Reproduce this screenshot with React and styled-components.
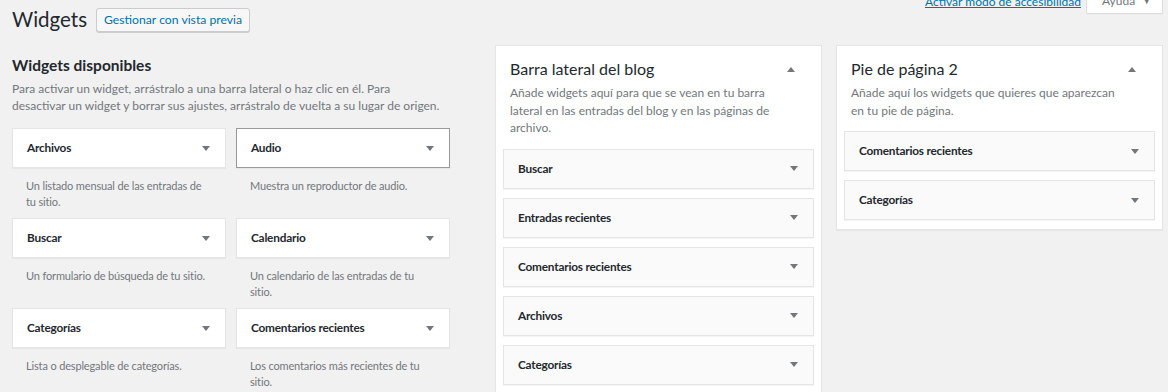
import React from 'react';
import styled, { createGlobalStyle } from 'styled-components';

const Global = createGlobalStyle`
  html, body { margin: 0; padding: 0; background: #f1f1f1; }
  body {
    font-family: Lato, "Open Sans", sans-serif;
    font-size: 12px;
    color: #444;
    overflow: hidden;
  }
  * { box-sizing: border-box; }
`;

const Page = styled.div`
  width: 1168px;
  height: 392px;
  overflow: hidden;
  padding: 6px 5px 0 12px;
`;

const Header = styled.div`
  display: flex;
  align-items: center;
  height: 27px;
`;

const Title = styled.h1`
  margin: 0;
  font-size: 20.5px;
  line-height: 27px;
  font-weight: 400;
  color: #23282d;
`;

const PreviewButton = styled.button`
  margin-left: 9px;
  height: 24px;
  padding: 0 7px;
  font-family: inherit;
  font-size: 12.2px;
  line-height: 22px;
  color: #0073aa;
  background: #f7f7f7;
  border: 1px solid #ccc;
  border-radius: 3px;
  box-shadow: 0 1px 0 #ccc;
  cursor: pointer;
`;

const ScreenMeta = styled.div`
  margin-left: auto;
  align-self: flex-start;
  margin-top: -13px;
  display: flex;
  align-items: flex-start;
  gap: 5px;
`;

const A11yLink = styled.a`
  margin-top: 1px;
  font-size: 12px;
  line-height: 16px;
  color: #0073aa;
  text-decoration: underline;
`;

const HelpButton = styled.button`
  height: 21px;
  width: 77px;
  padding: 0 0 0 15px;
  font-family: inherit;
  font-size: 12px;
  line-height: 16px;
  color: #72777c;
  background: #fff;
  border: 1px solid #ddd;
  border-top: none;
  box-shadow: 0 1px 1px -1px rgba(0,0,0,.1);
  display: flex;
  align-items: flex-start;
  gap: 7px;
`;

const Caret = styled.span`
  font-size: 9px;
  line-height: 16px;
`;

const Main = styled.div`
  display: flex;
  align-items: flex-start;
  margin-top: 12px;
`;

const LeftColumn = styled.div`
  width: 438px;
  margin-right: 45px;
  flex-shrink: 0;
`;

const SectionTitle = styled.h2`
  margin: 10px 0 0;
  font-size: 15.5px;
  line-height: 20px;
  font-weight: 700;
  color: #23282d;
`;

const Intro = styled.p`
  margin: 5px -20px 0 0;
  font-size: 12px;
  line-height: 17px;
  color: #72777c;
`;

const WidgetGrid = styled.div`
  display: grid;
  grid-template-columns: 214px 214px;
  column-gap: 10px;
  grid-auto-rows: 90px;
  margin-top: 14px;
`;

const Item = styled.div``;

const WidgetTop = styled.div`
  height: 40px;
  display: flex;
  align-items: center;
  justify-content: space-between;
  padding: 0 15px 0 14px;
  background: ${p => (p.$inSidebar ? '#fafafa' : '#fff')};
  border: 1px solid ${p => (p.$hover ? '#999' : '#e5e5e5')};
  box-shadow: 0 1px 1px rgba(0,0,0,.04);
`;

const WidgetName = styled.h3`
  margin: 0;
  font-size: 11.8px;
  line-height: 16px;
  font-weight: 700;
  letter-spacing: -0.2px;
  color: #23282d;
`;

const Arrow = styled.span`
  width: 0;
  height: 0;
  border-left: 4.5px solid transparent;
  border-right: 4.5px solid transparent;
  ${p => (p.$up
    ? 'border-bottom: 5px solid #72777c;'
    : 'border-top: 5px solid #72777c;')}
  flex-shrink: 0;
`;

const WidgetDesc = styled.div`
  padding: 10px 16px 0 14px;
  font-size: 11px;
  line-height: 16px;
  letter-spacing: -0.15px;
  color: #72777c;
`;

const Sidebar = styled.div`
  width: ${p => p.$width}px;
  margin-right: ${p => p.$gap || 0}px;
  flex-shrink: 0;
  background: #fff;
  border: 1px solid #e5e5e5;
  box-shadow: 0 1px 1px rgba(0,0,0,.04);
  padding: 0 7px 9px;
`;

const SidebarHeader = styled.div`
  display: flex;
  align-items: center;
  justify-content: space-between;
  padding: 12px 19px 0 7px;
`;

const SidebarTitle = styled.h2`
  margin: 0;
  font-size: 16px;
  line-height: 22px;
  font-weight: 400;
  color: #23282d;
`;

const SidebarDesc = styled.p`
  margin: 4px 0 0;
  padding: 0 32px 0 7px;
  font-size: 12px;
  line-height: 17.5px;
  color: #72777c;
`;

const SidebarWidgets = styled.div`
  display: flex;
  flex-direction: column;
  gap: 9px;
  margin-top: 12px;
`;

const available = [
  { name: 'Archivos', desc: 'Un listado mensual de las entradas de tu sitio.' },
  { name: 'Audio', desc: 'Muestra un reproductor de audio.', hover: true },
  { name: 'Buscar', desc: 'Un formulario de búsqueda de tu sitio.' },
  { name: 'Calendario', desc: 'Un calendario de las entradas de tu sitio.' },
  { name: 'Categorías', desc: 'Lista o desplegable de categorías.' },
  { name: 'Comentarios recientes', desc: 'Los comentarios más recientes de tu sitio.' },
];

const areas = [
  {
    title: 'Barra lateral del blog',
    desc: 'Añade widgets aquí para que se vean en tu barra lateral en las entradas del blog y en las páginas de archivo.',
    widgets: ['Buscar', 'Entradas recientes', 'Comentarios recientes', 'Archivos', 'Categorías'],
    width: 327,
    gap: 14,
  },
  {
    title: 'Pie de página 2',
    desc: 'Añade aquí los widgets que quieres que aparezcan en tu pie de página.',
    widgets: ['Comentarios recientes', 'Categorías'],
    width: 327,
  },
];

export default function App() {
  return (
    <>
      <Global />
      <Page>
        <Header>
          <Title>Widgets</Title>
          <PreviewButton>Gestionar con vista previa</PreviewButton>
          <ScreenMeta>
            <A11yLink href="#">Activar modo de accesibilidad</A11yLink>
            <HelpButton>Ayuda <Caret>▼</Caret></HelpButton>
          </ScreenMeta>
        </Header>
        <Main>
          <LeftColumn>
            <SectionTitle>Widgets disponibles</SectionTitle>
            <Intro>
              Para activar un widget, arrástralo a una barra lateral o haz clic en él. Para<br />
              desactivar un widget y borrar sus ajustes, arrástralo de vuelta a su lugar de origen.
            </Intro>
            <WidgetGrid>
              {available.map(w => (
                <Item key={w.name}>
                  <WidgetTop $hover={w.hover}>
                    <WidgetName>{w.name}</WidgetName>
                    <Arrow />
                  </WidgetTop>
                  <WidgetDesc>{w.desc}</WidgetDesc>
                </Item>
              ))}
            </WidgetGrid>
          </LeftColumn>
          {areas.map(a => (
            <Sidebar key={a.title} $width={a.width} $gap={a.gap}>
              <SidebarHeader>
                <SidebarTitle>{a.title}</SidebarTitle>
                <Arrow $up />
              </SidebarHeader>
              <SidebarDesc>{a.desc}</SidebarDesc>
              <SidebarWidgets>
                {a.widgets.map(w => (
                  <WidgetTop key={w} $inSidebar>
                    <WidgetName>{w}</WidgetName>
                    <Arrow />
                  </WidgetTop>
                ))}
              </SidebarWidgets>
            </Sidebar>
          ))}
        </Main>
      </Page>
    </>
  );
}
